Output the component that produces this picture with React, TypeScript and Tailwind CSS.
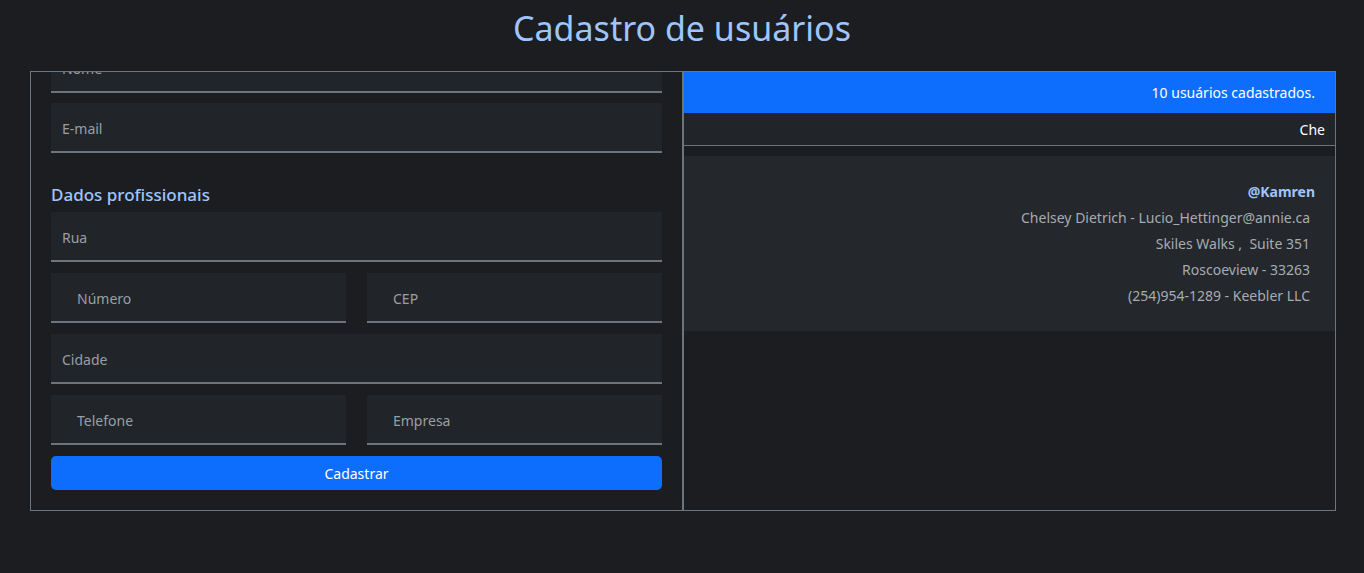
import React from "react";

// ─── Form fields ─────────────────────────────────────────────────────────────

function Field({ label, half }: { label: string; half?: boolean }) {
  return (
    <div
      className={`flex h-[50px] items-center border-b-2 border-[#6c757d] bg-[#212529] pt-[2px] text-[14px] text-[#9a9fa6] ${
        half ? "pl-[26px]" : "pl-[11px]"
      }`}
    >
      {label}
    </div>
  );
}

// ─── Users list ──────────────────────────────────────────────────────────────

const USER = {
  username: "@Kamren",
  name: "Chelsey Dietrich",
  email: "Lucio_Hettinger@annie.ca",
  street: "Skiles Walks",
  suite: "Suite 351",
  city: "Roscoeview",
  zipcode: "33263",
  phone: "(254)954-1289",
  company: "Keebler LLC",
};

export default function App() {
  return (
    <div
      className="min-h-[573px] bg-[#1c1d21] pb-[62px]"
      style={{ fontFamily: "'Noto Sans', 'Open Sans', sans-serif" }}
    >
      <h1 className="pt-[7px] pb-[21px] text-center text-[34px] leading-[43px] text-[#9ec5fe]">
        Cadastro de usuários
      </h1>

      <div className="ml-[30px] grid h-[440px] w-[1306px] grid-cols-2 border border-[#6c757d]">
        {/* Form */}
        <div className="overflow-hidden border-r border-[#6c757d] px-[20px]">
          <div className="-mt-[29px] flex flex-col gap-[10px]">
            <Field label="Nome" />
            <Field label="E-mail" />
          </div>
          <h2 className="mt-[30px] mb-[5px] text-[17px] leading-[24px] font-medium text-[#9ec5fe]">
            Dados profissionais
          </h2>
          <div className="flex flex-col gap-[11px]">
            <Field label="Rua" />
            <div className="grid grid-cols-2 gap-[21px]">
              <Field label="Número" half />
              <Field label="CEP" half />
            </div>
            <Field label="Cidade" />
            <div className="grid grid-cols-2 gap-[21px]">
              <Field label="Telefone" half />
              <Field label="Empresa" half />
            </div>
            <button className="h-[34px] rounded-[5px] bg-[#0d6efd] text-[14px] text-white">
              Cadastrar
            </button>
          </div>
        </div>

        {/* List */}
        <div className="overflow-hidden border-l border-[#6c757d]">
          <div className="flex h-[41px] items-center justify-end bg-[#0d6efd] pr-[20px] text-[14px] text-white">
            10 usuários cadastrados.
          </div>
          <div className="flex h-[33px] items-center justify-end border-b border-[#6c757d] bg-[#212529] pr-[10px] text-[14px] text-white">
            Che
          </div>
          <div className="mt-[10px] flex flex-col items-end bg-[#24272b] pt-[23px] pr-[20px] pb-[22px] text-[14px] leading-[26px] text-[#a7acb2]">
            <span className="font-bold text-[#9ec5fe]">{USER.username}</span>
            <span className="pr-[5px]">
              {USER.name} - {USER.email}
            </span>
            <span className="pr-[5px]">
              {USER.street} ,&nbsp; {USER.suite}
            </span>
            <span className="pr-[5px]">
              {USER.city} - {USER.zipcode}
            </span>
            <span className="pr-[5px]">
              {USER.phone} - {USER.company}
            </span>
          </div>
        </div>
      </div>
    </div>
  );
}
